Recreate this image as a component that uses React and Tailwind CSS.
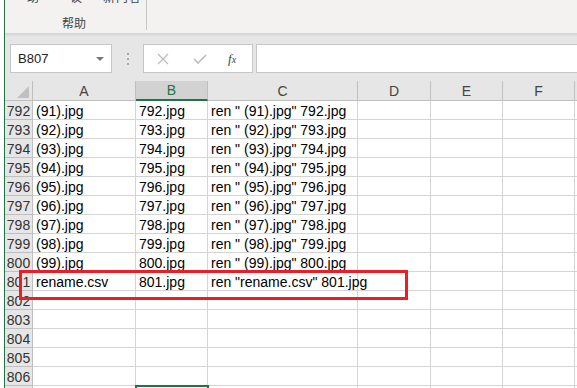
import React from 'react';

const cols = [
  { key: 'A', w: 'w-[103px]' },
  { key: 'B', w: 'w-[72px]' },
  { key: 'C', w: 'w-[150px]' },
  { key: 'D', w: 'w-[73px]' },
  { key: 'E', w: 'w-[72px]' },
  { key: 'F', w: 'w-[72px]' },
];

const rows = [];
for (let i = 0; i < 9; i++) {
  const n = 91 + i;
  const r = 792 + i;
  rows.push({ num: r, A: `(${n}).jpg`, B: `${r}.jpg`, C: `ren " (${n}).jpg" ${r}.jpg` });
}
rows.push({ num: 801, A: 'rename.csv', B: '801.jpg', C: 'ren "rename.csv" 801.jpg' });
for (let r = 802; r <= 807; r++) rows.push({ num: r, A: '', B: '', C: '' });

const App = () => {
  return (
    <div className="relative w-[577px] h-[388px] overflow-hidden flex bg-white" style={{ fontFamily: '"Liberation Sans", "Noto Sans CJK SC", sans-serif' }}>
      <div className="w-[4px] bg-white" />
      <div className="w-[1px] bg-[#217346]" />
      <div className="flex-1 flex flex-col min-w-0">
        {/* ribbon */}
        <div className="h-[33px] bg-[#f3f2f1] flex relative shrink-0" style={{ fontFamily: '"Noto Sans CJK SC", sans-serif' }}>
          <div className="w-[141px] relative">
            <div className="absolute -top-[10px] left-0 w-full flex text-[12px] text-[#444] leading-[14px]">
              <span className="ml-[22px]">助</span>
              <span className="ml-[31px]">议</span>
              <span className="ml-[21px] tracking-[1px]">新内容</span>
            </div>
            <div className="absolute top-[15px] left-[57px] text-[12px] text-[#444] leading-[16px]">帮助</div>
          </div>
          <div className="w-[1px] h-[30px] bg-[#c8c6c4]" />
        </div>
        <div className="h-[4px] shrink-0 bg-gradient-to-b from-[#d2d2d2] to-[#e6e6e6]" />
        {/* formula bar */}
        <div className="h-[44px] shrink-0 bg-[#e6e6e6] flex items-start pt-[7px]">
          <div className="ml-[5px] w-[102px] h-[29px] bg-white border border-[#c6c6c6] flex items-center px-[7px] text-[13px] text-[#222]">
            <span className="flex-1">B807</span>
            <span className="w-0 h-0 border-l-[4px] border-r-[4px] border-t-[4px] border-l-transparent border-r-transparent border-t-[#777]" />
          </div>
          <div className="w-[31px] h-[29px] flex flex-col items-center justify-center gap-[3px]">
            <span className="w-[2px] h-[2px] bg-[#a8a8a8]" />
            <span className="w-[2px] h-[2px] bg-[#a8a8a8]" />
            <span className="w-[2px] h-[2px] bg-[#a8a8a8]" />
          </div>
          <div className="w-[110px] h-[29px] bg-white border border-[#c6c6c6] flex items-center">
            <svg width="12" height="12" viewBox="0 0 12 12" className="ml-[13px]">
              <path d="M1 1L11 11M11 1L1 11" stroke="#bdbdbd" strokeWidth="1.3" />
            </svg>
            <svg width="14" height="12" viewBox="0 0 14 12" className="ml-[24px]">
              <path d="M1 6L5 10L13 2" stroke="#bdbdbd" strokeWidth="1.6" fill="none" />
            </svg>
            <span className="ml-[21px] text-[13px] text-[#444] italic" style={{ fontFamily: '"Liberation Serif", serif' }}>f<span className="text-[10px]">x</span></span>
          </div>
          <div className="ml-[3px] flex-1 h-[29px] bg-white border border-[#c6c6c6] border-r-0" />
        </div>
        {/* grid */}
        <div className="flex flex-col text-[14px] text-black">
          <div className="flex h-[20px] shrink-0 bg-[#e6e6e6] text-[#444]">
            <div className="w-[28px] border-r border-b border-[#bfbfbf] relative">
              <div className="absolute right-[3px] bottom-[3px] w-0 h-0 border-l-[11px] border-t-[11px] border-l-transparent border-t-transparent border-b-0 border-r-0" style={{ borderBottom: '0', borderRight: '0' }} />
              <svg width="12" height="12" viewBox="0 0 12 12" className="absolute right-[3px] bottom-[2px]">
                <path d="M12 0L12 12L0 12Z" fill="#c0c0c0" />
              </svg>
            </div>
            {cols.map((c) =>
              c.key === 'B' ? (
                <div key={c.key} className={`${c.w} bg-[#d2d2d2] border-r border-[#bfbfbf] border-b-2 border-b-[#217346] text-[#217346] flex items-center justify-center leading-[18px]`}>
                  {c.key}
                </div>
              ) : (
                <div key={c.key} className={`${c.w} border-r border-b border-[#bfbfbf] flex items-center justify-center leading-[18px]`}>
                  {c.key}
                </div>
              )
            )}
            <div className="flex-1 border-b border-[#bfbfbf]" />
          </div>
          {rows.map((r) => (
            <div key={r.num} className="flex h-[19px] shrink-0">
              <div className="w-[28px] bg-[#e6e6e6] border-r border-b border-[#bfbfbf] text-[#333] flex justify-center pt-[2px] leading-[16px]">
                {r.num}
              </div>
              {cols.map((c) => (
                <div
                  key={c.key}
                  className={`${c.w} border-r border-b border-[#d4d4d4] pl-[3px] pt-[2px] leading-[16px] whitespace-nowrap overflow-visible ${r.num === 807 && c.key === 'B' ? 'outline-2 outline-[#217346] -outline-offset-1' : ''}`}
                >
                  {r[c.key] || ''}
                </div>
              ))}
              <div className="flex-1 border-b border-[#d4d4d4]" />
            </div>
          ))}
        </div>
      </div>
      {/* red annotation box */}
      <div className="absolute left-[19px] top-[270px] w-[389px] h-[30px] border-[3px] border-[#ee1c25]" />
    </div>
  );
};

export default App;
